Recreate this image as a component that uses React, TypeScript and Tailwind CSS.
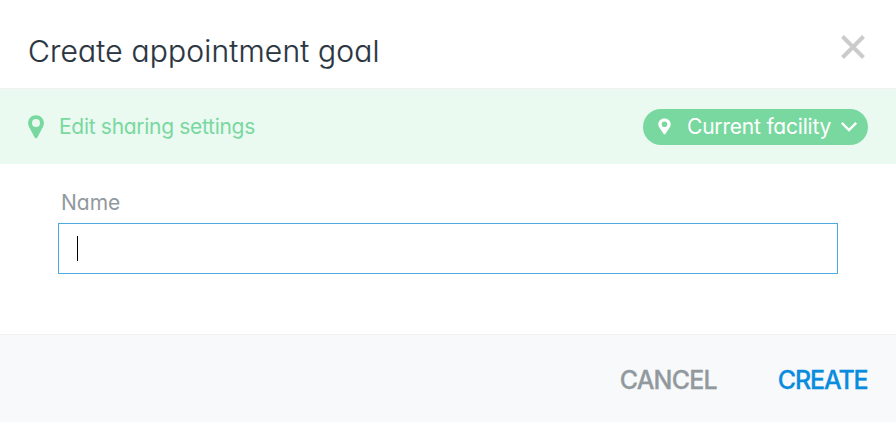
interface PinProps {
    className?: string;
}

function PinIcon({ className }: PinProps) {
    return (
        <svg viewBox="0 0 16 24" fill="currentColor" className={className}>
            <path
                fillRule="evenodd"
                d="M8 0.2C3.6 0.2 0.1 3.6 0.1 7.9c0 1.9.7 3.6 1.7 5.4l4.7 9c.6 1.2 2.4 1.2 3 0l4.7-9c1-1.8 1.7-3.5 1.7-5.4C15.9 3.6 12.4.2 8 .2Zm0 3.7a4 4 0 1 1 0 8 4 4 0 0 1 0-8Z"
            />
        </svg>
    );
}

export default function App() {
    return (
        <div className="flex h-[422px] w-[896px] flex-col bg-white font-['Inter','Liberation_Sans',sans-serif] [font-feature-settings:'cv11']">
            <header className="flex h-[88px] items-start justify-between pr-[31px] pl-[28px]">
                <h1 className="pt-[33px] text-[30px] leading-[36px] font-light tracking-[0.2px] whitespace-nowrap text-[#2a3540] [-webkit-text-stroke:0.2px_currentColor]">
                    Create appointment goal
                </h1>
                <button type="button" aria-label="Close" className="mt-[35px]">
                    <svg
                        viewBox="0 0 24 24"
                        className="h-[24px] w-[24px] overflow-visible"
                        fill="none"
                        stroke="#cbcbcb"
                        strokeWidth="4"
                    >
                        <path d="M1.5 1.5l21 21M22.5 1.5l-21 21" />
                    </svg>
                </button>
            </header>

            <section className="flex h-[76px] items-center justify-between border-t border-[#f0f1f0] bg-[#eafaf1] pr-[28px] pl-[28px]">
                <div className="flex items-center text-[#79d89f]">
                    <PinIcon className="h-[24px] w-[16px]" />
                    <span className="ml-[15px] text-[21px] leading-[26px] tracking-[-0.3px] whitespace-nowrap">
                        Edit sharing settings
                    </span>
                </div>
                <button
                    type="button"
                    className="flex h-[36px] w-[225px] items-center rounded-full bg-[#79d89f] pl-[15px] text-white"
                >
                    <svg
                        viewBox="0 0 13 17"
                        className="h-[17px] w-[13px]"
                        fill="currentColor"
                    >
                        <path
                            fillRule="evenodd"
                            d="M6.5 0.4C3 .4.3 3 .3 6.3c0 1.2.4 2.2 1 3.2l4.4 6.6c.4.6 1.2.6 1.6 0l4.4-6.6c.6-1 1-2 1-3.2C12.7 3 10 .4 6.5.4Zm0 3.1a2.8 2.8 0 1 1 0 5.6 2.8 2.8 0 0 1 0-5.6Z"
                        />
                    </svg>
                    <span className="ml-[16px] text-[21px] leading-[26px] tracking-[-0.2px] whitespace-nowrap">
                        Current facility
                    </span>
                    <svg
                        viewBox="0 0 16 10"
                        className="mr-[11px] ml-auto h-[10px] w-[16px] overflow-visible"
                        fill="none"
                        stroke="currentColor"
                        strokeWidth="2.4"
                    >
                        <path d="M0.8 0.8L8 8l7.2-7.2" />
                    </svg>
                </button>
            </section>

            <main className="flex h-[170px] flex-col px-[58px] pt-[26px]">
                <label className="pl-[3px] text-[21px] leading-[26px] text-[#92999e]">
                    Name
                </label>
                <div className="mt-[7px] flex h-[51px] items-center border border-[#4ea9df] pl-[18px]">
                    <span className="h-[25px] w-px bg-black" />
                </div>
            </main>

            <footer className="flex h-[88px] items-center justify-end gap-[61px] border-t border-[#f0f1f2] bg-[#f7f9fb] pt-[3px] pr-[28.5px] text-[25px] leading-[30px] font-medium">
                <button
                    type="button"
                    className="tracking-[-0.8px] text-[#92999e] [-webkit-text-stroke:0.3px_currentColor]"
                >
                    CANCEL
                </button>
                <button
                    type="button"
                    className="tracking-[-1.15px] text-[#0a8cde] [-webkit-text-stroke:0.3px_currentColor]"
                >
                    CREATE
                </button>
            </footer>
        </div>
    );
}
